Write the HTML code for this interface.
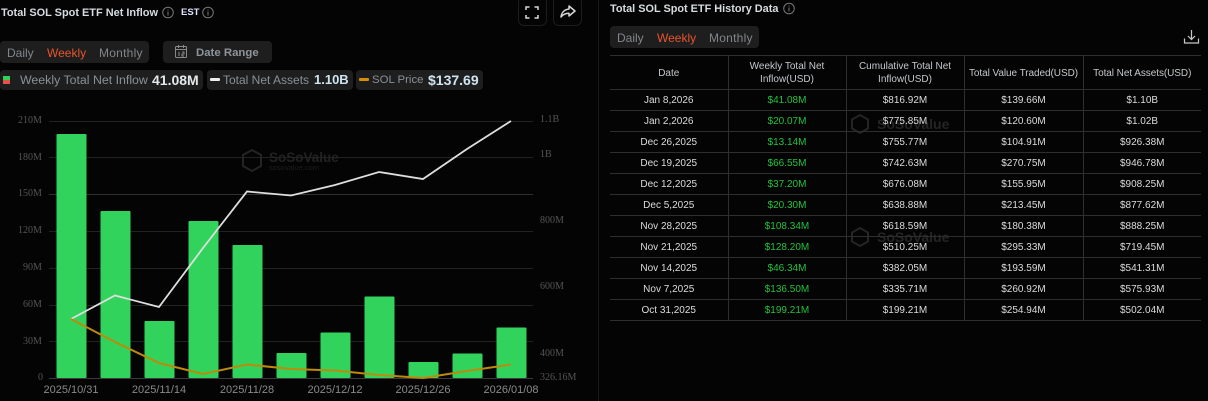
<!DOCTYPE html>
<html><head><meta charset="utf-8"><style>
*{box-sizing:border-box}
html,body{margin:0;padding:0;background:#040404}
body{width:1208px;height:401px;overflow:hidden;position:relative;font-family:"Liberation Sans",sans-serif;color:#ddd}
#w{position:absolute;left:0;top:0;width:1208px;height:401px;filter:blur(.35px)}
.a{position:absolute;white-space:nowrap}
.pill{position:absolute;background:#1e1e1e;border-radius:4px}
.t{position:absolute;white-space:nowrap;font-size:12px;line-height:14px;color:#80868c}
.w{color:#e8542c}
.v{position:absolute;white-space:nowrap;font-size:14px;line-height:16px;font-weight:bold;color:#e4e8ea}
.l{position:absolute;font-family:"Liberation Serif",serif;font-size:10px;line-height:12px;color:#555;white-space:nowrap}
.x{position:absolute;font-size:11px;line-height:12px;color:#8a8a8a;white-space:nowrap;width:70px;text-align:center;top:384px}
table{position:absolute;left:610px;top:55px;width:591px;border-collapse:collapse;table-layout:fixed;font-size:10px;color:#dcdcdc}
td,th{border-top:1px solid #2e2e2e;border-bottom:1px solid #2e2e2e;border-left:1px solid #2e2e2e;padding:1px 0 0;text-align:center;font-weight:normal;height:21px;line-height:12px}
td:first-child,th:first-child{border-left:none}
th{height:34px;line-height:13px;color:#c4c8cc;font-size:10px}
th.n{letter-spacing:-.06px}
td:nth-child(2){color:#22c23e}
tr.b td{border-top-color:#464646}
</style></head><body><div id="w">

<div class="a" style="left:1px;top:6px;font-size:10.95px;line-height:14px;font-weight:bold;color:#d6dce0">Total SOL Spot ETF Net Inflow</div>
<svg class="a" style="left:161px;top:6px" width="54" height="13" fill="none" stroke="#777"><circle cx="7" cy="6.500" r="5.300"/><path d="M7 3.500v1M7 5.500v4"/><circle cx="47" cy="6.500" r="5.300"/><path d="M47 3.500v1M47 5.500v4"/></svg>
<div class="a" style="left:181px;top:7px;font-size:9.500px;line-height:12px;font-weight:bold;color:#dfe3ff">EST</div>

<div class="a" style="left:518px;top:-4px;width:29px;height:30px;border:1px solid #1c1c1c;border-radius:6px"></div>
<div class="a" style="left:553px;top:-4px;width:29px;height:30px;border:1px solid #1c1c1c;border-radius:6px"></div>
<svg class="a" style="left:524px;top:5px" width="16" height="15" fill="none" stroke="#d8d8d8" stroke-width="1.500"><path d="M2 5V2h3.500M10.500 2H14v3M14 10v3h-3.500M5.500 13H2v-3"/></svg>
<svg class="a" style="left:560px;top:4px" width="16" height="15" fill="none" stroke="#d8d8d8" stroke-width="1.500" stroke-linejoin="round"><path d="M9 2l6 5-6 5V9.300C5.500 9.300 3 10.500 1 13c.5-4.500 3.500-7.500 8-8z"/></svg>

<div class="pill" style="left:0;top:41px;width:149px;height:22px"></div>
<div class="t" style="left:7px;top:45.500px">Daily</div>
<div class="t w" style="left:47px;top:45.500px">Weekly</div>
<div class="t" style="left:99px;top:45.500px;letter-spacing:.25px">Monthly</div>

<div class="pill" style="left:163px;top:41px;width:109px;height:22px"></div>
<svg class="a" style="left:174px;top:44px" width="15" height="15" fill="none" stroke="#8a8a8a"><rect x="1.500" y="2.500" width="11" height="11" rx="1"/><path d="M1.500 5.500h11M4.500 1v3M9.500 1v3M5 8v4M8 8h2v2H8v2h2"/></svg>
<div class="t" style="left:196px;top:45.500px;color:#8e9499;font-weight:bold;font-size:11.400px">Date Range</div>

<div class="pill" style="left:0;top:70px;width:203px;height:20px"></div>
<div class="a" style="left:3px;top:76px;width:7px;height:4px;background:#2fd158"></div>
<div class="a" style="left:3px;top:80px;width:7px;height:4px;background:#e8504a"></div>
<div class="t" style="left:20px;top:73px;color:#8a9096;font-size:12.350px">Weekly Total Net Inflow</div>
<div class="v" style="left:152px;top:72px">41.08M</div>

<div class="pill" style="left:207px;top:70px;width:146px;height:20px"></div>
<div class="a" style="left:210px;top:78px;width:10px;height:3px;background:#eee;border-radius:1px"></div>
<div class="t" style="left:223px;top:73px;color:#8a9096">Total Net Assets</div>
<div class="v" style="left:314px;top:72px;color:#cfe4f0;font-size:13px">1.10B</div>

<div class="pill" style="left:356px;top:70px;width:127px;height:20px"></div>
<div class="a" style="left:359px;top:78px;width:10px;height:3px;background:#d48f06;border-radius:1px"></div>
<div class="t" style="left:372px;top:73px;color:#8a9096;font-size:11.400px">SOL Price</div>
<div class="v" style="left:428px;top:72px;color:#cfe4f0">$137.69</div>

<div class="a" style="left:598px;top:0;width:1px;height:401px;background:#1a1a1a"></div>

<svg class="a" style="left:0;top:0" width="598" height="401">
<g stroke="#222" stroke-width="1"><path d="M49 121.500H533M49 157.500H533M49 231.500H533M49 268.500H533M49 305.500H533M49 341.500H533"/></g>
<path d="M49 194.500H533" stroke="#303030"/>
<path d="M49 378.500H533" stroke="#3a3a3a"/>
<path d="M252 150l9 5v11l-9 5-9-5v-11z" fill="none" stroke="#242424" stroke-width="2"/>
<text x="269" y="162" font-family="Liberation Sans" font-size="13.500" font-weight="bold" fill="#222">SoSoValue</text>
<text x="269" y="170" font-family="Liberation Sans" font-size="7.500" fill="#1e1e1e">sosovalue.com</text>
<g fill="#31d35c">
<rect x="56.500" y="134" width="30" height="244" rx="1"/>
<rect x="100.500" y="211" width="30" height="167" rx="1"/>
<rect x="144.500" y="321" width="30" height="57" rx="1"/>
<rect x="188.500" y="221" width="30" height="157" rx="1"/>
<rect x="232.500" y="245" width="30" height="133" rx="1"/>
<rect x="276.500" y="353" width="30" height="25" rx="1"/>
<rect x="320.500" y="332.500" width="30" height="45.500" rx="1"/>
<rect x="364.500" y="296.500" width="30" height="81.500" rx="1"/>
<rect x="408.500" y="362" width="30" height="16" rx="1"/>
<rect x="452.500" y="353.500" width="30" height="24.500" rx="1"/>
<rect x="496.500" y="327.500" width="30" height="50.500" rx="1"/>
</g>
<polyline fill="none" stroke="#dedede" stroke-width="1.800" points="71,319 115,295.500 159,307 203,248 247,191.500 291,195.500 335,185 379,172 423,179 467,149 511,121"/>
<polyline fill="none" stroke="#bd8a0c" stroke-width="2" points="71,319 115,342 159,363 203,374 247,364.500 291,369 335,370.500 379,375 423,378 467,371 511,364.500"/>
</svg>

<div class="l" style="left:18px;top:115px">210M</div>
<div class="l" style="left:18px;top:152px">180M</div>
<div class="l" style="left:18px;top:188px">150M</div>
<div class="l" style="left:18px;top:225px">120M</div>
<div class="l" style="left:23px;top:262px">90M</div>
<div class="l" style="left:23px;top:299px">60M</div>
<div class="l" style="left:23px;top:336px">30M</div>
<div class="l" style="left:38px;top:372px">0</div>

<div class="l" style="left:540px;top:114px">1.1B</div>
<div class="l" style="left:540px;top:149px">1B</div>
<div class="l" style="left:540px;top:215px">800M</div>
<div class="l" style="left:540px;top:281px">600M</div>
<div class="l" style="left:540px;top:348px">400M</div>
<div class="l" style="left:540px;top:372px">326.16M</div>

<div class="x" style="left:36px">2025/10/31</div>
<div class="x" style="left:124px">2025/11/14</div>
<div class="x" style="left:212px">2025/11/28</div>
<div class="x" style="left:300px">2025/12/12</div>
<div class="x" style="left:388px">2025/12/26</div>
<div class="x" style="left:476px">2026/01/08</div>

<div class="a" style="left:610px;top:2px;font-size:10.900px;line-height:14px;font-weight:bold;color:#d6dce0">Total SOL Spot ETF History Data</div>
<svg class="a" style="left:782px;top:2px" width="14" height="13" fill="none" stroke="#777"><circle cx="7" cy="6.500" r="5.300"/><path d="M7 3.500v1M7 5.500v4"/></svg>
<div class="pill" style="left:610px;top:26px;width:149px;height:22px"></div>
<div class="t" style="left:617px;top:30.500px">Daily</div>
<div class="t w" style="left:657px;top:30.500px">Weekly</div>
<div class="t" style="left:709px;top:30.500px;letter-spacing:.25px">Monthly</div>
<svg class="a" style="left:1183px;top:28px" width="17" height="17" fill="none" stroke="#c8c8c8" stroke-width="1.200"><path d="M8.500 2v9M5 8l3.500 3.500L12 8M1.500 10.500v4.500h14v-4.500"/></svg>

<svg class="a" style="left:840px;top:100px" width="110" height="160">
<path d="M20 15l8 4.500v9l-8 4.500-8-4.500v-9z" fill="none" stroke="#242424" stroke-width="2"/>
<path d="M20 128l8 4.500v9l-8 4.500-8-4.500v-9z" fill="none" stroke="#242424" stroke-width="2"/>
<text x="37" y="29" font-family="Liberation Sans" font-size="14" font-weight="bold" fill="#242424">SoSoValue</text>
<text x="37" y="142" font-family="Liberation Sans" font-size="14" font-weight="bold" fill="#242424">SoSoValue</text>
</svg>

<table>
<colgroup><col style="width:118px"><col style="width:118px"><col style="width:118px"><col style="width:119px"><col style="width:118px"></colgroup>
<tr><th>Date</th><th>Weekly Total Net<br>Inflow(USD)</th><th>Cumulative Total Net<br>Inflow(USD)</th><th class="n">Total Value Traded(USD)</th><th class="n">Total Net Assets(USD)</th></tr>
<tr><td>Jan 8,2026</td><td>$41.08M</td><td>$816.92M</td><td>$139.66M</td><td>$1.10B</td></tr>
<tr><td>Jan 2,2026</td><td>$20.07M</td><td>$775.85M</td><td>$120.60M</td><td>$1.02B</td></tr>
<tr><td>Dec 26,2025</td><td>$13.14M</td><td>$755.77M</td><td>$104.91M</td><td>$926.38M</td></tr>
<tr><td>Dec 19,2025</td><td>$66.55M</td><td>$742.63M</td><td>$270.75M</td><td>$946.78M</td></tr>
<tr><td>Dec 12,2025</td><td>$37.20M</td><td>$676.08M</td><td>$155.95M</td><td>$908.25M</td></tr>
<tr><td>Dec 5,2025</td><td>$20.30M</td><td>$638.88M</td><td>$213.45M</td><td>$877.62M</td></tr>
<tr><td>Nov 28,2025</td><td>$108.34M</td><td>$618.59M</td><td>$180.38M</td><td>$888.25M</td></tr>
<tr><td>Nov 21,2025</td><td>$128.20M</td><td>$510.25M</td><td>$295.33M</td><td>$719.45M</td></tr>
<tr><td>Nov 14,2025</td><td>$46.34M</td><td>$382.05M</td><td>$193.59M</td><td>$541.31M</td></tr>
<tr><td>Nov 7,2025</td><td>$136.50M</td><td>$335.71M</td><td>$260.92M</td><td>$575.93M</td></tr>
<tr class="b"><td>Oct 31,2025</td><td>$199.21M</td><td>$199.21M</td><td>$254.94M</td><td>$502.04M</td></tr>
</table>
</div></body></html>
